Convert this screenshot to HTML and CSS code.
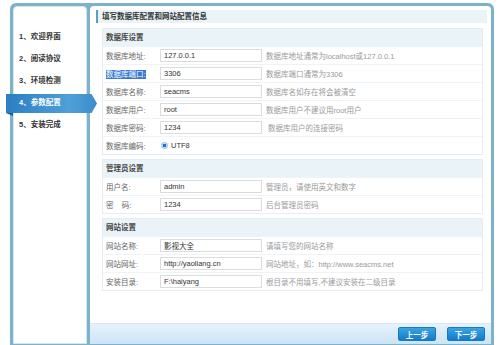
FILE: index.html
```html
<!DOCTYPE html>
<html lang="zh-CN">
<head>
  <meta charset="UTF-8">
  <title>安装向导 - 参数配置</title>
  <link rel="stylesheet" href="styles.css">
</head>
<body>
<div class="frame">
  <!-- Steps -->
  <div class="side">
    <ul class="steps">
      <li>1、欢迎界面</li>
      <li>2、阅读协议</li>
      <li>3、环境检测</li>
      <li class="on"><span>4、参数配置</span></li>
      <li>5、安装完成</li>
    </ul>
  </div>

  <div class="main">
    <div class="body">
      <div class="title">填写数据库配置和网站配置信息</div>

      <div class="box">
        <div class="box-head">数据库设置</div>
        <div class="row"><label>数据库地址:</label><input class="txt" type="text" value="127.0.0.1"><span class="tip">数据库地址通常为localhost或127.0.0.1</span></div>
        <div class="row"><label><span class="sel">数据库端口:</span></label><input class="txt" type="text" value="3306"><span class="tip">数据库端口通常为3306</span></div>
        <div class="row"><label>数据库名称:</label><input class="txt" type="text" value="seacms"><span class="tip">数据库名如存在将会被清空</span></div>
        <div class="row"><label>数据库用户:</label><input class="txt" type="text" value="root"><span class="tip">数据库用户不建议用root用户</span></div>
        <div class="row"><label>数据库密码:</label><input class="txt" type="text" value="1234"><span class="tip tip-pad">数据库用户的连接密码</span></div>
        <div class="row"><label>数据库编码:</label><span class="radio"><i></i>UTF8</span></div>
      </div>

      <div class="box">
        <div class="box-head">管理员设置</div>
        <div class="row"><label>用户名:</label><input class="txt" type="text" value="admin"><span class="tip">管理员，请使用英文和数字</span></div>
        <div class="row"><label>密&nbsp;&nbsp;&nbsp;&nbsp;码:</label><input class="txt" type="text" value="1234"><span class="tip">后台管理员密码</span></div>
      </div>

      <div class="box">
        <div class="box-head">网站设置</div>
        <div class="row"><label>网站名称:</label><input class="txt" type="text" value="影视大全"><span class="tip">请填写您的网站名称</span></div>
        <div class="row"><label>网站网址:</label><input class="txt" type="text" value="http://yaoliang.cn"><span class="tip">网站地址，如：http://www.seacms.net</span></div>
        <div class="row"><label>安装目录:</label><input class="txt" type="text" value="F:\haiyang"><span class="tip">根目录不用填写,不建议安装在二级目录</span></div>
      </div>
    </div>

    <div class="foot">
      <button class="btn">上一步</button>
      <button class="btn">下一步</button>
    </div>
  </div>
</div>
</body>
</html>
```

FILE: styles.css
```css
* { margin: 0; padding: 0; box-sizing: border-box; }
body {
  background: #fff;
  font-family: "Liberation Sans", "Noto Sans CJK SC", sans-serif;
  font-size: 7.5px;
  color: #666;
  overflow: hidden;
}

/* Outer frame */
.frame {
  display: flex;
  width: 484px;
  height: 343px;
  margin: 3px 0 0 10px;
  border: 3px solid #7ab3ca;
  border-bottom-width: 2px;
  border-radius: 6px 6px 0 0;
  background: #7ab3ca;
}

/* Left steps */
.side {
  position: relative;
  z-index: 2;
  width: 74px;
  background: #fff;
  border: 1px solid #d7e6ec;
  border-radius: 4px 4px 0 0;
}
.steps {
  list-style: none;
  padding: 19px 0 0 5px;
}
.steps li {
  position: relative;
  height: 22px;
  line-height: 22px;
  font-weight: bold;
  color: #333;
}
.steps li.on { color: #fff; }
.steps li.on span { position: relative; }
.steps li.on::before {
  content: "";
  position: absolute;
  left: -13px;
  top: 2px;
  width: 91px;
  height: 19px;
  background: linear-gradient(to right, #2b7fc2, #4f9fd8 70%, #3b8ccb);
  clip-path: polygon(0 0, 94% 0, 100% 50%, 94% 100%, 0 100%);
}
.steps li.on::after {
  content: "";
  position: absolute;
  left: -13px;
  top: 21px;
  width: 7px;
  height: 3px;
  background: #1d5f93;
  clip-path: polygon(0 0, 100% 0, 100% 100%);
}

/* Right panel */
.main {
  flex: 1;
  display: flex;
  flex-direction: column;
  margin-left: 3px;
  background: #fff;
  border-radius: 4px 4px 0 0;
}
.body {
  flex: 1;
  padding: 4px 4px 0 6px;
}
.title {
  height: 13px;
  line-height: 13px;
  padding-left: 4px;
  background: #eaf3f7;
  border-left: 2px solid #5a9fc0;
  font-weight: bold;
  color: #333;
  margin-bottom: 5px;
}

.box {
  margin: 0 4px 4px 6px;
  border: 1px solid #e2eef3;
}
.box-head {
  height: 17px;
  line-height: 17px;
  padding-left: 3px;
  background: #e9f3f8;
  font-weight: bold;
  color: #444;
}
.row {
  display: flex;
  align-items: center;
  height: 18px;
  border-top: 1px solid #edf4f7;
}
.row label {
  width: 57px;
  padding-left: 3px;
  white-space: nowrap;
}
.sel {
  background: #3a78d4;
  color: #fff;
}
.txt {
  width: 102px;
  height: 13px;
  padding: 0 3px;
  border: 1px solid #dcdcdc;
  font-family: "Liberation Sans", "Noto Sans CJK SC", sans-serif;
  font-size: 7.5px;
  color: #333;
  outline: none;
}
.tip {
  margin-left: 4px;
  color: #9a9a9a;
  white-space: nowrap;
}
.tip-pad { margin-left: 6px; }
.radio {
  display: flex;
  align-items: center;
  margin-left: 1px;
  color: #333;
}
.radio i {
  width: 7px;
  height: 7px;
  margin-right: 3px;
  border-radius: 50%;
  border: 1px solid #8fb8e8;
  background: radial-gradient(circle, #1a6fd6 40%, #cfe2f8 45%);
}

/* Footer buttons */
.foot {
  display: flex;
  justify-content: flex-end;
  align-items: center;
  gap: 11px;
  height: 21px;
  padding-right: 6px;
  background: linear-gradient(#e6f2fb, #cbe4f6);
  border-top: 1px solid #d6e8f4;
}
.btn {
  width: 38px;
  height: 14px;
  border: 1px solid #1a78bd;
  border-radius: 2px;
  background: linear-gradient(#39a4e6, #137cc4);
  color: #fff;
  font-family: "Liberation Sans", "Noto Sans CJK SC", sans-serif;
  font-size: 7.5px;
  font-weight: bold;
}
```
